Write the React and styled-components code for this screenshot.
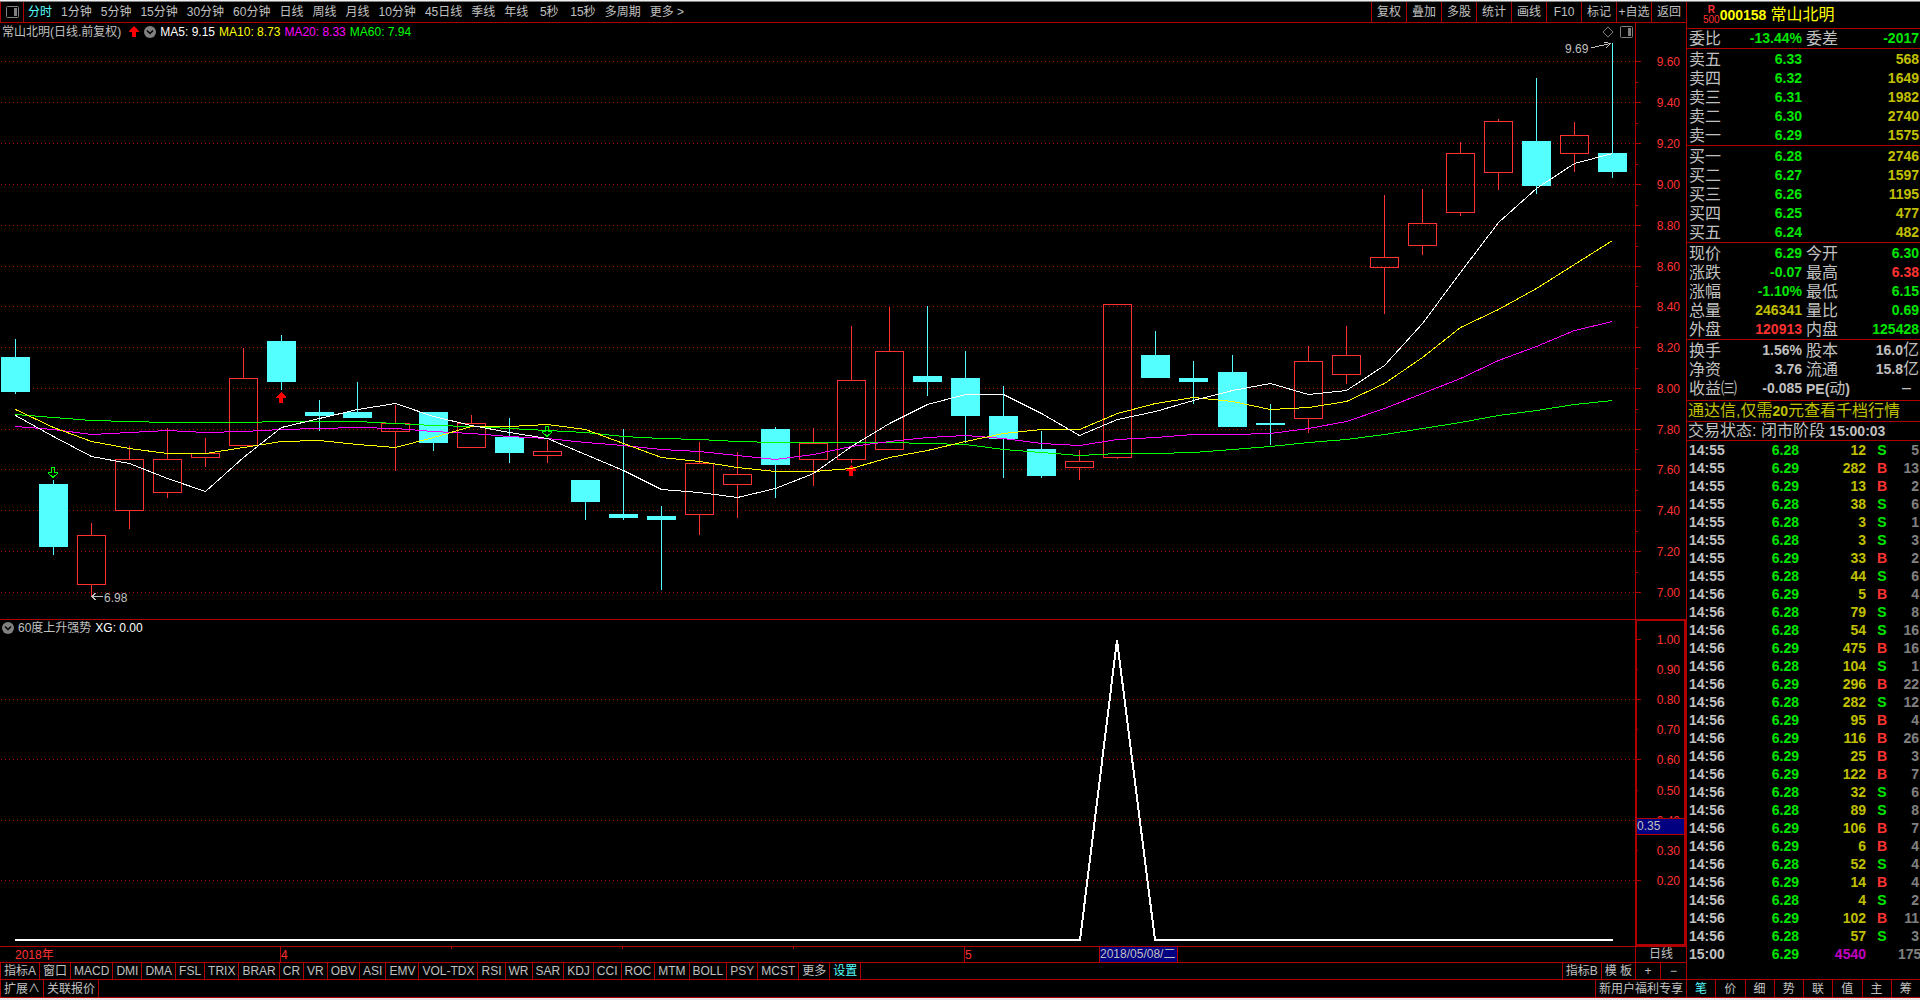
import React from "react";
import styled, { createGlobalStyle, ThemeProvider } from "styled-components";

const theme = {
  line: "#b00000",
  text: "#c0c0c0",
  muted: "#808080",
  up: "#ff3232",
  down: "#00e600",
  volume: "#c0c000",
  cyan: "#54ffff",
  violet: "#c000c0",
  navy: "#000080",
};

const GlobalStyle = createGlobalStyle`
  *, *::before, *::after {
    box-sizing: border-box;
  }

  body {
    margin: 0;
    background: #000;
    color: #c0c0c0;
    font-family: "Liberation Sans", "Noto Sans CJK SC", sans-serif;
    font-size: 12px;
    line-height: 16px;
  }

  button {
    margin: 0;
    padding: 0;
    border: 0;
    background: none;
    color: inherit;
    font: inherit;
    white-space: nowrap;
    cursor: pointer;
  }
`;

const Page = styled.div`
  display: flex;
  flex-direction: column;
  min-height: 100vh;
  border-bottom: 2px solid #e8e8e8;
`;

const WindowEdge = styled.div`
  height: 2px;
  background: #f0f0f0;
  border-bottom: 1px solid ${({ theme }) => theme.muted};
`;

const Body = styled.div`
  display: flex;
  flex: 1;
`;

const Main = styled.main`
  display: flex;
  flex-direction: column;
  flex: 1;
  min-width: 0;
`;

const Side = styled.aside`
  display: flex;
  flex-direction: column;
  width: 234px;
  flex-shrink: 0;
  border-left: 1px solid ${({ theme }) => theme.line};
`;

/* toolbars */

const Toolbar = styled.nav`
  display: flex;
  height: 21px;
  border-left: 1px solid ${({ theme }) => theme.line};
  border-bottom: 1px solid ${({ theme }) => theme.line};
`;

const LayoutButton = styled.button`
  display: flex;
  align-items: center;
  justify-content: center;
  width: 23px;
  border-right: 1px solid ${({ theme }) => theme.line};
`;

const Periods = styled.div`
  display: flex;
  gap: 9px;
  flex: 1;
  padding-left: 4px;
`;

const PeriodButton = styled.button`
  min-width: 24px;
  color: ${({ $active, theme }) => ($active ? theme.cyan : theme.text)};
`;

const ToolButton = styled.button`
  width: 35px;
  border-left: 1px solid ${({ theme }) => theme.line};
`;

const FooterBar = styled.nav`
  display: flex;
  height: ${({ $last }) => ($last ? "19px" : "17px")};
  border-top: 1px solid ${({ theme }) => theme.line};
  border-bottom: ${({ $last, theme }) => ($last ? `1px solid ${theme.line}` : "0")};
  border-left: 1px solid ${({ theme }) => theme.line};
`;

const FooterButton = styled.button`
  padding: 0 3px;
  border-right: 1px solid ${({ theme }) => theme.line};
  color: ${({ $active, theme }) => ($active ? theme.cyan : theme.text)};
`;

const FooterEnd = styled.div`
  display: flex;
  margin-left: auto;
  border-left: 1px solid ${({ theme }) => theme.line};

  button:last-child {
    border-right: 0;
  }
`;

const ZoomButton = styled(FooterButton)`
  width: 25px;
`;

/* charts */

const Pane = styled.section`
  position: relative;
`;

const Canvas = styled.svg`
  display: block;
  width: 100%;
  font-size: 12px;
`;

const Legend = styled.header`
  position: absolute;
  top: 0;
  left: 2px;
  display: flex;
  align-items: center;
  gap: 4px;
  height: 18px;
  white-space: nowrap;
`;

const LegendValue = styled.span`
  color: ${({ $color }) => $color};
`;

const PaneTools = styled.div`
  position: absolute;
  top: 3px;
  right: 53px;
  display: flex;
  gap: 6px;

  button {
    display: flex;
  }
`;

const TimeRow = styled.div`
  display: flex;
  height: 16px;
  border-top: 1px solid ${({ theme }) => theme.line};
`;

const TimeCanvas = styled(Canvas)`
  flex: 1;
  min-width: 0;
  height: 15px;
`;

const PeriodCell = styled.button`
  width: 51px;
  border-left: 1px solid ${({ theme }) => theme.line};
  line-height: 15px;
`;

/* quote panel */

const StockHeader = styled.h1`
  display: flex;
  align-items: center;
  height: 27px;
  margin: 0;
  padding-left: 16px;
  border-bottom: 1px solid ${({ theme }) => theme.line};
  color: #ffff00;
  font-size: 16px;
  font-weight: 400;
`;

const StockBadge = styled.span`
  display: flex;
  flex-direction: column;
  align-items: center;
  color: ${({ theme }) => theme.up};
  font-size: 10px;
  line-height: 10px;
`;

const Num = styled.b`
  font-size: 14px;
  line-height: 1;
`;

const StockName = styled.span`
  margin-left: 4px;
`;

const Block = styled.section`
  padding: ${({ $pad }) => $pad || "1px 0 0"};
  border-bottom: 1px solid ${({ theme }) => theme.line};
`;

const Table = styled.table`
  width: 100%;
  border-collapse: collapse;
  table-layout: fixed;
  white-space: nowrap;

  td,
  th {
    padding: 0;
  }
`;

const Col = styled.col`
  width: ${({ $width }) => $width}px;
`;

const Label = styled.th`
  height: 19px;
  font-size: 16px;
  font-weight: 400;
  line-height: 19px;
  text-align: left;

  ${Table} &:first-child {
    padding-left: 2px;
  }

  ${Table} &:not(:first-child) {
    padding-left: 4px;
  }
`;

const Value = styled.td`
  color: ${({ $tone, theme }) => theme[$tone] || theme.text};
  font-size: 14px;
  font-weight: 700;
  line-height: 17px;
  text-align: right;

  ${Table} &:last-child {
    padding-right: 1px;
  }
`;

const Unit = styled.span`
  font-size: 16px;
  font-weight: 400;
  line-height: 1;
`;

const Notice = styled.a`
  display: block;
  height: 21px;
  padding-left: 1px;
  border-bottom: 1px solid ${({ theme }) => theme.line};
  color: ${({ theme }) => theme.volume};
  font-size: 16px;
  line-height: 20px;
  text-decoration: none;
  white-space: nowrap;
`;

const Status = styled.div`
  height: 19px;
  padding-left: 1px;
  border-bottom: 1px solid ${({ theme }) => theme.line};
  font-size: 16px;
  line-height: 18px;
  white-space: nowrap;
`;

const TickCell = styled.td`
  height: 18px;
  color: ${({ $tone, theme }) => theme[$tone] || theme.text};
  font-size: 14px;
  font-weight: 700;
  line-height: 18px;
  text-align: ${({ $align }) => $align || "right"};

  ${Table} &:first-child {
    padding-left: 2px;
  }

  ${Table} &:last-child {
    padding-right: 1px;
  }
`;

const SideTabs = styled.nav`
  display: flex;
  height: 19px;
  margin-top: auto;
  border-top: 1px solid ${({ theme }) => theme.line};
  border-bottom: 1px solid ${({ theme }) => theme.line};
`;

const SideTab = styled.button`
  flex: 1;
  color: ${({ $active, theme }) => ($active ? theme.cyan : theme.text)};

  & + & {
    border-left: 1px solid ${({ theme }) => theme.line};
  }
`;

/* data */

const periods = [
  "分时", "1分钟", "5分钟", "15分钟", "30分钟", "60分钟", "日线", "周线", "月线",
  "10分钟", "45日线", "季线", "年线", "5秒", "15秒", "多周期",
];

const tools = ["复权", "叠加", "多股", "统计", "画线", "F10", "标记", "+自选", "返回"];

const indicators = [
  "指标A", "窗口", "MACD", "DMI", "DMA", "FSL", "TRIX", "BRAR", "CR", "VR", "OBV",
  "ASI", "EMV", "VOL-TDX", "RSI", "WR", "SAR", "KDJ", "CCI", "ROC", "MTM", "BOLL",
  "PSY", "MCST", "更多", "设置",
];

const sideTabs = ["笔", "价", "细", "势", "联", "值", "主", "筹"];

// [rising, high, body top, body bottom, low]
const candles = [
  [0, 339, 357, 392, 394], [0, 480, 484, 547, 555], [1, 523, 535, 584, 597],
  [1, 446, 459, 510, 529], [1, 428, 459, 492, 498], [1, 438, 453, 457, 467],
  [1, 348, 378, 445, 445], [0, 335, 341, 382, 390], [0, 400, 412, 416, 431],
  [0, 382, 412, 418, 418], [1, 405, 423, 431, 471], [0, 412, 412, 443, 451],
  [1, 415, 423, 447, 447], [0, 418, 437, 453, 463], [1, 440, 451, 455, 463],
  [0, 480, 480, 502, 520], [0, 429, 514, 518, 520], [0, 506, 516, 520, 590],
  [1, 442, 463, 514, 535], [1, 452, 474, 484, 518], [0, 427, 429, 465, 498],
  [1, 428, 443, 459, 486], [1, 326, 380, 459, 463], [1, 307, 351, 449, 449],
  [0, 306, 376, 382, 396], [0, 351, 378, 416, 443], [0, 386, 416, 439, 478],
  [0, 431, 449, 476, 478], [1, 450, 461, 467, 480], [1, 304, 304, 457, 459],
  [0, 331, 355, 378, 378], [0, 361, 378, 382, 404], [0, 355, 372, 427, 427],
  [0, 404, 423, 425, 445], [1, 346, 361, 418, 433], [1, 326, 355, 374, 384],
  [1, 195, 257, 267, 314], [1, 189, 223, 245, 255], [1, 142, 153, 212, 216],
  [1, 119, 121, 172, 190], [0, 78, 141, 186, 194], [1, 122, 135, 153, 172],
  [0, 43, 153, 172, 178],
];

const averages = [
  {
    color: "#00ff00",
    ys: [414, 417, 420, 421, 422, 422, 422, 421, 421, 421, 423, 425, 426, 428, 430, 432, 436, 438, 439, 441, 442, 442, 442, 442, 443, 444, 449, 452, 455, 453, 453, 452, 449, 446, 442, 439, 434, 428, 422, 415, 410, 404, 400],
  },
  {
    color: "#ff00ff",
    ys: [426, 429, 434, 432, 430, 432, 431, 429, 428, 427, 428, 431, 433, 436, 438, 442, 445, 449, 451, 455, 459, 454, 446, 441, 437, 435, 438, 443, 445, 439, 437, 434, 434, 433, 428, 421, 408, 393, 378, 360, 346, 330, 321],
  },
  {
    color: "#ffff00",
    ys: [409, 427, 441, 448, 453, 453, 447, 441, 440, 444, 447, 437, 426, 426, 424, 429, 443, 457, 461, 467, 471, 471, 468, 457, 450, 441, 433, 429, 429, 413, 403, 397, 401, 409, 407, 401, 383, 357, 327, 309, 288, 264, 240],
  },
  {
    color: "#ffffff",
    ys: [415, 436, 456, 463, 478, 491, 457, 427, 418, 409, 403, 416, 425, 432, 438, 454, 470, 489, 492, 497, 488, 473, 446, 423, 404, 394, 394, 413, 435, 419, 411, 400, 390, 383, 394, 390, 365, 323, 272, 222, 188, 163, 153],
  },
];

const priceScale = [
  ["9.60", 61], ["9.40", 102], ["9.20", 143], ["9.00", 184], ["8.80", 225],
  ["8.60", 266], ["8.40", 306], ["8.20", 347], ["8.00", 388], ["7.80", 429],
  ["7.60", 469], ["7.40", 510], ["7.20", 551], ["7.00", 592],
];

const signalScale = [
  ["1.00", 639], ["0.90", 669], ["0.80", 699], ["0.70", 729], ["0.60", 759],
  ["0.50", 790], ["0.40", 820], ["0.30", 850], ["0.20", 880],
];

const asks = [
  ["卖五", "6.33", 568], ["卖四", "6.32", 1649], ["卖三", "6.31", 1982],
  ["卖二", "6.30", 2740], ["卖一", "6.29", 1575],
];

const bids = [
  ["买一", "6.28", 2746], ["买二", "6.27", 1597], ["买三", "6.26", 1195],
  ["买四", "6.25", 477], ["买五", "6.24", 482],
];

const quotes = [
  ["现价", "6.29", "down", "今开", "6.30", "down"],
  ["涨跌", "-0.07", "down", "最高", "6.38", "up"],
  ["涨幅", "-1.10%", "down", "最低", "6.15", "down"],
  ["总量", "246341", "volume", "量比", "0.69", "down"],
  ["外盘", "120913", "up", "内盘", "125428", "down"],
];

const ticks = [
  [12, "S", 5], [282, "B", 13], [13, "B", 2], [38, "S", 6], [3, "S", 1], [3, "S", 3],
  [33, "B", 2], [44, "S", 6], [5, "B", 4], [79, "S", 8], [54, "S", 16], [475, "B", 16],
  [104, "S", 1], [296, "B", 22], [282, "S", 12], [95, "B", 4], [116, "B", 26],
  [25, "B", 3], [122, "B", 7], [32, "S", 6], [89, "S", 8], [106, "B", 7], [6, "B", 4],
  [52, "S", 4], [14, "B", 4], [4, "S", 2], [102, "B", 11], [57, "S", 3],
];

const candleX = (i) => 15 + 38 * i + (i >= 32 ? 1 : 0);

/* icons */

const PanelIcon = () => (
  <svg width="13" height="12" viewBox="0 0 13 12" fill="none">
    <rect x="0.5" y="0.5" width="12" height="11" rx="1" stroke="#808080" />
    <rect x="8" y="2" width="3" height="8" fill="#808080" />
  </svg>
);

const DiamondIcon = () => (
  <svg width="12" height="12" viewBox="0 0 12 12" fill="none">
    <path d="M6 1 L11 6 L6 11 L1 6 Z" stroke="#808080" />
  </svg>
);

const ChevronBadge = () => (
  <svg width="12" height="12" viewBox="0 0 12 12" fill="none">
    <circle cx="6" cy="6" r="6" fill="#808080" />
    <path d="M3 4.5 L6 7.5 L9 4.5" stroke="#000" strokeWidth="1.5" />
  </svg>
);

const RiseIcon = () => (
  <svg width="15" height="12" viewBox="0 0 15 12">
    <path d="M9 0 L14 5 V6 H11 V11 H7 V6 H4 V5 Z" fill="#ff0000" />
  </svg>
);

const BuyMark = ({ x, y }) => (
  <path
    d={`M${x} ${y} l5 5 v1 h-3 v5 h-4 v-5 h-3 v-1 z`}
    fill="#ff0000"
    shapeRendering="crispEdges"
  />
);

const SellMark = ({ x, y }) => (
  <path
    d={`M${x - 1.5} ${y + 0.5} h3 v5 h3 v1 l-4.5 4 l-4.5 -4 v-1 h3 z`}
    fill="none"
    stroke="#00ff00"
    shapeRendering="crispEdges"
  />
);

const Candle = ({ x, rising, high, top, bottom, low }) => {
  const color = rising ? theme.up : theme.cyan;
  return (
    <g fill={color}>
      {high < top && <rect x={x} y={high} width="1" height={top - high} />}
      {low > bottom && <rect x={x} y={bottom} width="1" height={low - bottom} />}
      {rising ? (
        <rect
          x={x - 13.5}
          y={top + 0.5}
          width="28"
          height={bottom - top}
          fill="none"
          stroke={color}
        />
      ) : (
        <rect x={x - 14} y={top} width="29" height={bottom - top} />
      )}
    </g>
  );
};

const GridLine = ({ y }) => (
  <line x1="1" x2="1635" y1={y + 0.5} y2={y + 0.5} stroke={theme.line} strokeDasharray="1 3" />
);

const PriceChart = () => (
  <Canvas viewBox="0 23 1686 596" role="img" aria-label="日线">
    <g shapeRendering="crispEdges">
      {priceScale.map(([label, y]) => (
        <GridLine key={label} y={y} />
      ))}
      <rect x="1635" y="23" width="1" height="596" fill={theme.line} />
      {priceScale.map(([label, y]) => (
        <g key={label} fill={theme.line}>
          <rect x="1636" y={y} width="5" height="1" />
          {y > 61 && <rect x="1636" y={y - 20} width="2" height="1" />}
        </g>
      ))}
      {candles.map(([rising, high, top, bottom, low], i) => (
        <Candle
          key={i}
          x={candleX(i)}
          rising={rising}
          high={high}
          top={top}
          bottom={bottom}
          low={low}
        />
      ))}
    </g>
    <BuyMark x={281} y={392} />
    <BuyMark x={851} y={465} />
    <SellMark x={53} y={467} />
    <SellMark x={547} y={426} />
    <g fill="none" shapeRendering="crispEdges">
      {averages.map(({ color, ys }) => (
        <polyline
          key={color}
          stroke={color}
          points={ys.map((y, i) => `${candleX(i) + 0.5},${y + 0.5}`).join(" ")}
        />
      ))}
      <path d="M92 596.5 H103 M95.5 593 L92 596.5 L95.5 600" stroke={theme.text} />
      <path d="M1591 48 L1610 43.5 M1604 42 L1610.5 43.5 L1606 48" stroke={theme.text} />
    </g>
    <text x="104" y="602" fill={theme.text}>6.98</text>
    <text x="1565" y="53" fill={theme.text}>9.69</text>
    <g fill={theme.up} textAnchor="end">
      {priceScale.map(([label, y]) => (
        <text key={label} x="1680" y={y + 5}>{label}</text>
      ))}
    </g>
  </Canvas>
);

const SignalChart = () => (
  <Canvas viewBox="0 619 1686 327" role="img" aria-label="60度上升强势">
    <g shapeRendering="crispEdges">
      <rect x="0" y="619" width="1686" height="1" fill={theme.line} />
      {signalScale
        .filter((_, i) => i > 0 && i % 2 === 0)
        .map(([label, y]) => (
          <GridLine key={label} y={y} />
        ))}
      {signalScale.map(([label, y], i) => (
        <rect
          key={label}
          x="1637"
          y={y}
          width={i % 2 ? 1 : 4}
          height="1"
          fill={theme.line}
        />
      ))}
      <polyline
        points="15,940 1080,940 1117,640 1155,940 1613,940"
        fill="none"
        stroke="#fff"
        strokeWidth="2"
        strokeLinejoin="bevel"
      />
    </g>
    <g fill={theme.up} textAnchor="end">
      {signalScale.map(([label, y]) => (
        <text key={label} x="1680" y={y + 5}>{label}</text>
      ))}
    </g>
    <g shapeRendering="crispEdges">
      <rect x="1636.5" y="818.5" width="49" height="16" fill={theme.navy} stroke={theme.line} />
      <rect x="1636" y="620" width="49" height="325" fill="none" stroke={theme.line} strokeWidth="2" />
    </g>
    <text x="1637" y="830" fill={theme.text}>0.35</text>
  </Canvas>
);

const TimeAxis = () => (
  <TimeRow>
    <TimeCanvas viewBox="0 947 1635 15" preserveAspectRatio="xMinYMin">
      <g fill={theme.line} shapeRendering="crispEdges">
        <rect x="280" y="947" width="1" height="15" />
        <rect x="964" y="947" width="1" height="15" />
        {[451, 622, 793].map((x) => (
          <rect key={x} x={x} y="947" width="1" height="2" />
        ))}
        <rect x="1099" y="947" width="79" height="15" />
        <rect x="1100" y="947" width="77" height="15" fill={theme.navy} />
      </g>
      <g fill={theme.up}>
        <text x="15" y="959">2018年</text>
        <text x="281" y="959">4</text>
        <text x="965" y="959">5</text>
      </g>
      <text x="1100" y="958" fill={theme.text}>2018/05/08/二</text>
    </TimeCanvas>
    <PeriodCell>日线</PeriodCell>
  </TimeRow>
);

const QuoteCols = () => (
  <colgroup>
    <Col $width={52} />
    <Col $width={63} />
    <Col $width={48} />
    <col />
  </colgroup>
);

const DepthTable = ({ rows }) => (
  <Block>
    <Table>
      <QuoteCols />
      <tbody>
        {rows.map(([label, price, volume]) => (
          <tr key={label}>
            <Label scope="row">{label}</Label>
            <Value $tone="down">{price}</Value>
            <Value $tone="volume" colSpan={2}>{volume}</Value>
          </tr>
        ))}
      </tbody>
    </Table>
  </Block>
);

const QuoteTable = ({ rows, pad }) => (
  <Block $pad={pad}>
    <Table>
      <QuoteCols />
      <tbody>
        {rows.map(([label, value, tone, label2, value2, tone2], index) => (
          <tr key={index}>
            <Label scope="row">{label}</Label>
            <Value $tone={tone}>{value}</Value>
            <Label scope="row">{label2}</Label>
            <Value $tone={tone2}>{value2}</Value>
          </tr>
        ))}
      </tbody>
    </Table>
  </Block>
);

const finance = [
  ["换手", "1.56%", "text", "股本", <>16.0<Unit>亿</Unit></>, "text"],
  ["净资", "3.76", "text", "流通", <>15.8<Unit>亿</Unit></>, "text"],
  ["收益㈢", "-0.085", "text", <><Num>PE(</Num>动<Num>)</Num></>, <Unit>–&ensp;</Unit>, "text"],
];

const TickTable = () => (
  <Table>
    <colgroup>
      <Col $width={52} />
      <Col $width={60} />
      <Col $width={67} />
      <Col $width={32} />
      <col />
    </colgroup>
    <tbody>
      {ticks.map(([volume, side, count], index) => (
        <tr key={index}>
          <TickCell $align="left">{index < 8 ? "14:55" : "14:56"}</TickCell>
          <TickCell $tone="down">{side === "S" ? "6.28" : "6.29"}</TickCell>
          <TickCell $tone="volume">{volume}</TickCell>
          <TickCell $tone={side === "S" ? "down" : "up"} $align="center">{side}</TickCell>
          <TickCell $tone="muted">{count}</TickCell>
        </tr>
      ))}
      <tr>
        <TickCell $align="left">15:00</TickCell>
        <TickCell $tone="down">6.29</TickCell>
        <TickCell $tone="violet">4540</TickCell>
        <TickCell />
        <TickCell $tone="muted">175</TickCell>
      </tr>
    </tbody>
  </Table>
);

const App = () => (
  <ThemeProvider theme={theme}>
    <GlobalStyle />
    <Page>
      <WindowEdge />
      <Body>
        <Main>
          <Toolbar>
            <LayoutButton aria-label="布局">
              <PanelIcon />
            </LayoutButton>
            <Periods>
              {periods.map((name, index) => (
                <PeriodButton key={name} $active={index === 0}>{name}</PeriodButton>
              ))}
              <PeriodButton>更多 &gt;</PeriodButton>
            </Periods>
            {tools.map((name) => (
              <ToolButton key={name}>{name}</ToolButton>
            ))}
          </Toolbar>

          <Pane>
            <PriceChart />
            <Legend>
              <span>常山北明(日线.前复权)</span>
              <RiseIcon />
              <ChevronBadge />
              <LegendValue $color="#ffffff">MA5: 9.15</LegendValue>
              <LegendValue $color="#ffff00">MA10: 8.73</LegendValue>
              <LegendValue $color="#ff00ff">MA20: 8.33</LegendValue>
              <LegendValue $color="#00ff00">MA60: 7.94</LegendValue>
            </Legend>
            <PaneTools>
              <button aria-label="标记">
                <DiamondIcon />
              </button>
              <button aria-label="面板">
                <PanelIcon />
              </button>
            </PaneTools>
          </Pane>

          <Pane>
            <SignalChart />
            <Legend>
              <ChevronBadge />
              <span>60度上升强势</span>
              <LegendValue $color="#ffffff">XG: 0.00</LegendValue>
            </Legend>
          </Pane>
          <TimeAxis />

          <FooterBar>
            {indicators.map((name) => (
              <FooterButton key={name} $active={name === "设置"}>{name}</FooterButton>
            ))}
            <FooterEnd>
              <FooterButton>指标B</FooterButton>
              <FooterButton>模 板</FooterButton>
              <ZoomButton>+</ZoomButton>
              <ZoomButton>−</ZoomButton>
            </FooterEnd>
          </FooterBar>
          <FooterBar $last>
            <FooterButton>扩展∧</FooterButton>
            <FooterButton>关联报价</FooterButton>
            <FooterEnd>
              <FooterButton>新用户福利专享</FooterButton>
            </FooterEnd>
          </FooterBar>
        </Main>

        <Side>
          <StockHeader>
            <StockBadge>
              <b>R</b>
              <span>500</span>
            </StockBadge>
            <Num>000158</Num>
            <StockName>常山北明</StockName>
          </StockHeader>
          <QuoteTable pad="0" rows={[["委比", "-13.44%", "down", "委差", "-2017", "down"]]} />
          <DepthTable rows={asks} />
          <DepthTable rows={bids} />
          <QuoteTable rows={quotes} />
          <QuoteTable pad="1px 0 2px" rows={finance} />
          <Notice href="#">
            通达信,仅需<Num>20</Num>元查看千档行情
          </Notice>
          <Status>
            交易状态: 闭市阶段 <Num>15:00:03</Num>
          </Status>
          <TickTable />
          <SideTabs>
            {sideTabs.map((name, index) => (
              <SideTab key={name} $active={index === 0}>{name}</SideTab>
            ))}
          </SideTabs>
        </Side>
      </Body>
    </Page>
  </ThemeProvider>
);

export default App;
